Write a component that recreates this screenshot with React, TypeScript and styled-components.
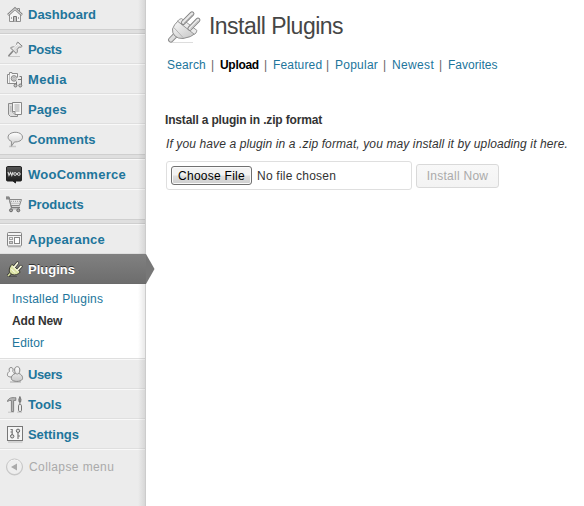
import React from 'react';
import styled, { createGlobalStyle } from 'styled-components';

const Global = createGlobalStyle`
  * { box-sizing: border-box; }
  body { margin: 0; background: #fff; font: 12px/16px "Liberation Sans", Arial, sans-serif; color: #333; }
`;

const Defs = styled.svg`
  position: absolute;
  width: 0;
  height: 0;
`;
const Page = styled.div`
  display: flex;
  height: 506px;
  overflow: hidden;
`;
const Sidebar = styled.nav`
  position: relative;
  width: 146px;
  flex: none;
  background: #ececec;
  &::after {
    content: '';
    position: absolute;
    inset: 0 0 0 auto;
    width: 7px;
    border-right: 1px solid #ccc;
    background: linear-gradient(90deg, rgba(0, 0, 0, 0), rgba(0, 0, 0, 0.09));
    pointer-events: none;
  }
`;
const Item = styled.a<{ $first?: boolean; $last?: boolean }>`
  display: flex;
  align-items: center;
  height: ${p => (p.$first ? 29 : 30)}px;
  border-top: ${p => (p.$first ? 0 : 1)}px solid #f9f9f9;
  border-bottom: 1px solid ${p => (p.$last ? '#ececec' : '#dfdfdf')};
  padding-left: 5px;
  color: #21759b;
  text-decoration: none;
`;
const Current = styled(Item)`
  position: relative;
  z-index: 2;
  border-top: 1px solid #808080;
  border-bottom: 1px solid #6a6a6a;
  background: linear-gradient(#808080, #6d6d6d);
  color: #fff;
  text-shadow: 0 -1px 0 #333;
`;
const Arrow = styled.svg`
  position: absolute;
  left: 146px;
  top: -1px;
`;
const Icon = styled.svg`
  width: 20px;
  height: 20px;
  flex: none;
  margin-right: 3px;
`;
const Label = styled.span<{ $ls?: number }>`
  padding-top: 2px;
  font-size: 13px;
  font-weight: bold;
  letter-spacing: ${p => p.$ls || 0}px;
  white-space: nowrap;
`;
const Separator = styled.div`
  height: 5px;
  background: #dfdfdf;
  border-top: 1px solid #cfcfcf;
  border-bottom: 1px solid #cfcfcf;
`;
const Submenu = styled.div`
  height: 75px;
  padding: 4px 0 0 12px;
  background: #fff;
  border-bottom: 1px solid #dfdfdf;
`;
const SubItem = styled.a<{ $on?: boolean; $ls: number }>`
  display: block;
  line-height: 22px;
  color: ${p => (p.$on ? '#333' : '#21759b')};
  font-weight: ${p => (p.$on ? 'bold' : 'normal')};
  letter-spacing: ${p => p.$ls}px;
`;
const Collapse = styled.div`
  display: flex;
  align-items: center;
  height: 34px;
  padding-left: 5px;
  border-top: 1px solid #f9f9f9;
  color: #aaa;
  letter-spacing: 0.4px;
`;
const CollapseIcon = styled(Icon)`
  margin-right: 4px;
`;
const Main = styled.main`
  flex: 1;
  padding: 9px 0 0 19px;
  white-space: nowrap;
`;
const Header = styled.header`
  display: flex;
  height: 35px;
  margin-left: 1px;
`;
const Plug = styled.svg`
  width: 36px;
  height: 36px;
  margin-right: 5px;
`;
const Title = styled.h1`
  margin: 0 0 0 2px;
  color: #464646;
  font-size: 23px;
  line-height: 34px;
  font-weight: normal;
  letter-spacing: -0.53px;
`;
const Tabs = styled.div`
  display: flex;
  margin: 13px 0 0 2px;
  height: 16px;
`;
const Tab = styled.a<{ $w: number; $ls: number; $on?: boolean }>`
  width: ${p => p.$w}px;
  color: ${p => (p.$on ? '#000' : '#21759b')};
  font-weight: ${p => (p.$on ? 'bold' : 'normal')};
  letter-spacing: ${p => p.$ls}px;
`;
const Bar = styled.span<{ $w: number }>`
  width: ${p => p.$w}px;
  color: #666;
`;
const FormTitle = styled.h4`
  margin: 39px 0 0;
  font-size: 12px;
  line-height: 16px;
  letter-spacing: -0.16px;
`;
const Help = styled.p`
  margin: 8px 0 0 1px;
  font-style: italic;
  letter-spacing: 0.115px;
`;
const Form = styled.div`
  display: flex;
  align-items: center;
  gap: 4px;
  margin: 9px 0 0 1px;
`;
const FileField = styled.div`
  display: flex;
  align-items: center;
  width: 246px;
  height: 29px;
  padding: 0 4px;
  border: 1px solid #dfdfdf;
  border-radius: 3px;
  letter-spacing: 0.22px;
`;
const ChooseButton = styled.button`
  width: 81px;
  height: 19px;
  margin-right: 5px;
  padding: 0;
  border: 1px solid #707070;
  border-radius: 3px;
  box-shadow: inset 0 0 0 1px #fafafa;
  background: linear-gradient(#f2f2f2 0 48%, #dedede 52%, #cfcfcf);
  color: #000;
  font: 12px/16px "Liberation Sans", Arial, sans-serif;
  letter-spacing: 0.25px;
`;
const InstallButton = styled.button`
  width: 83px;
  height: 24px;
  padding: 0;
  border: 1px solid #d9d9d9;
  border-radius: 3px;
  background: linear-gradient(#f8f8f8, #f3f3f3);
  color: #aaa;
  font: 12px/22px "Liberation Sans", Arial, sans-serif;
  letter-spacing: 0.25px;
`;

const art: Record<string, React.ReactNode> = {
  home: (
    <>
      <path d="M4.5 10.5V17.5H15.5V10.5L10 5Z" fill="#f3f3f3" stroke="#929292" />
      <path d="M12.5 4.5H14.5V9L12.5 7Z" fill="#eee" stroke="#8c8c8c" />
      <path d="M3 11L10 4.5L17 11" fill="none" stroke="#858585" strokeWidth="2.6" />
      <path d="M3.3 10.8L10 4.7L16.7 10.8" fill="none" stroke="#f8f8f8" strokeWidth=".9" />
      <path d="M8.5 17.5V12.5H11.5V17.5" fill="#c4c4c4" stroke="#777" />
      <path d="M6.5 13V15M13.5 13V15" stroke="#aaa" />
    </>
  ),
  pin: (
    <>
      <path d="M3 17.5H15" stroke="#c6c6c6" />
      <path d="M3.5 17L8 12" stroke="#858585" strokeWidth="1.6" />
      <path d="M5.5 9C6.7 7.8 8.5 7.8 9.7 8L12 5.8C11.5 4.8 11.8 4 12.8 3L17.2 7.2C16.3 8.2 15.5 8.5 14.3 8L12.2 10.4C12.7 12 12.4 13.4 11.2 14.4Z" fill="#dedede" stroke="#808080" />
      <path d="M8 9.5L12.8 5.3L14.5 6.4" fill="none" stroke="#fff" />
    </>
  ),
  media: (
    <>
      <path d="M2.5 5.5H4.5V3.5H7V4.5H12.5V14.5H2.5Z" fill="#f6f6f6" stroke="#8b8b8b" />
      <path d="M4.5 6V14" stroke="#c0c0c0" />
      <circle cx="9" cy="9.4" r="2.8" fill="#ccc" stroke="#8b8b8b" />
      <circle cx="9" cy="9.4" r="1" fill="#fff" stroke="#aaa" />
      <path d="M11.5 16V8.5H16.8V16" fill="#ececec" />
      <path d="M11.5 17V12.5M16.5 16V7.5H14.5M16.5 10.5H13" fill="none" stroke="#777" />
      <circle cx="10.5" cy="16.5" r="1.5" fill="#ccc" stroke="#777" />
      <circle cx="15.3" cy="16.5" r="1.5" fill="#ccc" stroke="#777" />
    </>
  ),
  pages: (
    <>
      <path d="M3.5 4.5H12.5V17.5H5.5L3.5 15.5Z" fill="#ddd" stroke="#8b8b8b" />
      <path d="M7.5 3.5H16.5V15.5H10L7.5 13Z" fill="#f7f7f7" stroke="#888" />
      <path d="M9.5 6H14.5M9.5 8H14.5M9.5 10H14.5M10 12H14.5M5 8H6.5M5 10H6.5M5 12H6.5" stroke="#a5a5a5" />
      <path d="M7.5 12.5H10V15.5" fill="#ddd" stroke="#888" />
    </>
  ),
  comment: (
    <>
      <path d="M4 17.5H11" stroke="#c8c8c8" strokeWidth="1.5" />
      <path d="M6.5 12.4C1.8 10.6 2.2 5.8 6 4.2C11 2 17.5 4 17.5 8.2C17.5 11.4 13.5 13.2 9.5 12.9L6.3 17.3Z" fill="url(#soft)" stroke="#909090" />
    </>
  ),
  woo: (
    <>
      <path d="M2.5 2.5H15.5Q16.5 2.5 16.5 4V16Q16.5 17 15.5 17H10.5V19L8 17H2.5Q1.5 17 1.5 16V4Q1.5 2.5 2.5 2.5Z" fill="url(#black)" stroke="#222" />
      <path d="M3 8L4 11.4L5.5 8.5L6.8 11.4L8 8" fill="none" stroke="#ddd" strokeWidth="1.1" />
      <circle cx="10.1" cy="10" r="1.4" fill="none" stroke="#ddd" />
      <circle cx="13.8" cy="10" r="1.4" fill="none" stroke="#ddd" />
    </>
  ),
  cart: (
    <>
      <path d="M1 3.5H4L6.5 13.5H15" fill="none" stroke="#7d7d7d" strokeWidth="1.4" />
      <path d="M4.5 5.5H16.5L14.5 11.5H6Z" fill="#e8e8e8" stroke="#8a8a8a" />
      <path d="M6 7.3H16M6.5 9.3H15" stroke="#999" strokeDasharray="1 1" />
      <path d="M5.5 15H14.5" stroke="#aaa" />
      <circle cx="6" cy="16.3" r="1.5" fill="#aaa" stroke="#696969" />
      <circle cx="13.3" cy="16.3" r="1.5" fill="#aaa" stroke="#696969" />
      <path d="M1 2.5H4V5.5H1Z" fill="#888" />
    </>
  ),
  appearance: (
    <>
      <path d="M3 18H16" stroke="#c5c5c5" />
      <rect x="2.5" y="3.5" width="14" height="13.5" rx="1" fill="#f4f4f4" stroke="#858585" />
      <path d="M3 6.5H16" stroke="#8d8d8d" />
      <rect x="4.5" y="8.5" width="3" height="2" fill="none" stroke="#a0a0a0" />
      <rect x="4.5" y="12.5" width="3" height="2" fill="#ccc" stroke="#999" />
      <rect x="9.5" y="8.5" width="5" height="6" fill="#fff" stroke="#888" />
    </>
  ),
  plugin: (
    <>
      <path d="M2.5 17.5H12" stroke="#535353" />
      <path d="M3 17L6 13.8" stroke="#333" strokeWidth="3.2" />
      <path d="M3 17L6 13.8" stroke="#dce3a1" strokeWidth="1.5" />
      <path d="M9.5 7.5L12.5 4M13 10.8L16 7.4" stroke="#333" strokeWidth="3.2" strokeLinecap="round" />
      <path d="M7 5.3L15.3 13C12.8 15.8 10 16.6 7 15.5L4.4 13.2C3.8 10.2 4.7 7.5 7 5.3Z" fill="#dce3a6" stroke="#3c3c33" />
      <path d="M9.5 7.8L12.5 4M12.7 11L16 7.4" stroke="#f7f7db" strokeWidth="1.8" strokeLinecap="round" />
      <path d="M7.5 7L13 12.5M6.2 9.8L10 13.7" stroke="#fffff0" />
    </>
  ),
  users: (
    <>
      <path d="M5 18H16" stroke="#aaa" />
      <path d="M6 3.5C3.8 3.5 3.8 6 4.6 7.3C2 8.4 2 12 3.3 12.4C5 13.5 9 13.2 9.5 11.5C10 9.2 8.7 8 7.6 7.3C8.5 6 8.4 3.5 6 3.5Z" fill="#f3f3f3" stroke="#8c8c8c" />
      <path d="M12.3 2.7C9.2 2.7 9 6.5 10.6 9.5C6.8 10.5 5.8 13.4 6.6 15.4C8 18 15.5 18.2 17.3 15.3C18.3 13 16.5 10.3 13.9 9.5C15.5 6.5 15 2.7 12.3 2.7Z" fill="url(#soft)" stroke="#858585" />
      <path d="M10.4 9.3Q12.2 11 14 9.3" fill="none" stroke="#999" />
    </>
  ),
  tools: (
    <>
      <path d="M3 18.2H9M12 18.2H17" stroke="#c5c5c5" />
      <path d="M2.5 7C4 3.5 7 3.5 10.8 3.7V6.4H8.6V17.5H6.4V6.5Q4.2 6.1 2.5 7.5Z" fill="#b4b4b4" stroke="#828282" />
      <path d="M14.9 2.5L16 5.5L15.6 8H14.2L13.8 5.5Z" fill="#888" stroke="#777" />
      <path d="M14.9 7V11" stroke="#777" />
      <rect x="13.5" y="10.5" width="3" height="7" rx="1.2" fill="#ececec" stroke="#777" />
    </>
  ),
  settings: (
    <>
      <path d="M3 18H17.5" stroke="#bababa" />
      <rect x="2.5" y="2.5" width="15" height="14" fill="#f5f5f5" stroke="#777" />
      <path d="M7.2 5V11M13 9V15M5.5 5.5H7.5M5.5 8H7.5M13 12H15" stroke="#777" strokeWidth="1.2" />
      <circle cx="7.2" cy="12.3" r="1.7" fill="#ddd" stroke="#666" />
      <circle cx="13" cy="6.8" r="1.7" fill="#ddd" stroke="#666" />
    </>
  ),
};

type Entry = { icon: string; text: string; ls?: number };
const groups: Entry[][] = [
  [{ icon: 'home', text: 'Dashboard' }],
  [
    { icon: 'pin', text: 'Posts', ls: -0.35 },
    { icon: 'media', text: 'Media', ls: 0.4 },
    { icon: 'pages', text: 'Pages', ls: 0.1 },
    { icon: 'comment', text: 'Comments', ls: 0.05 },
  ],
  [
    { icon: 'woo', text: 'WooCommerce', ls: 0.26 },
    { icon: 'cart', text: 'Products', ls: -0.1 },
  ],
];
const tail: Entry[] = [
  { icon: 'users', text: 'Users', ls: -0.4 },
  { icon: 'tools', text: 'Tools' },
  { icon: 'settings', text: 'Settings', ls: -0.05 },
];
const tabs = [
  { text: 'Search', w: 44, ls: 0.15, bar: 9 },
  { text: 'Upload', w: 44, ls: -0.3, bar: 9, on: true },
  { text: 'Featured', w: 53, ls: 0.15, bar: 9 },
  { text: 'Popular', w: 48, ls: 0.25, bar: 9 },
  { text: 'Newest', w: 47, ls: 0.35, bar: 9 },
  { text: 'Favorites', w: 52, ls: 0.02, bar: 0 },
];

function MenuItem({ icon, text, ls, first, last }: Entry & { first?: boolean; last?: boolean }) {
  return (
    <Item $first={first} $last={last}>
      <Icon viewBox="0 0 20 20">{art[icon]}</Icon>
      <Label $ls={ls}>{text}</Label>
    </Item>
  );
}

export default function App() {
  return (
    <>
      <Global />
      <Defs>
        <defs>
          <linearGradient id="soft" x2="0" y2="1"><stop stopColor="#fff" /><stop offset="1" stopColor="#c9c9c9" /></linearGradient>
          <linearGradient id="black" x2="0" y2="1"><stop stopColor="#555" /><stop offset="1" stopColor="#151515" /></linearGradient>
          <linearGradient id="metal" x2="1" y2="1"><stop stopColor="#fafafa" /><stop offset="1" stopColor="#c3c3c3" /></linearGradient>
        </defs>
      </Defs>
      <Page>
        <Sidebar>
          {groups.map((g, gi) => (
            <React.Fragment key={gi}>
              {g.map((e, i) => (
                <MenuItem key={e.text} {...e} first={gi === 0} last={i === g.length - 1} />
              ))}
              <Separator />
            </React.Fragment>
          ))}
          <MenuItem icon="appearance" text="Appearance" ls={0.27} />
          <Current>
            <Icon viewBox="0 0 20 20">{art.plugin}</Icon>
            <Label>Plugins</Label>
            <Arrow width="9" height="30"><path d="M0 0L8.5 15L0 30Z" fill="#777" /></Arrow>
          </Current>
          <Submenu>
            <SubItem $ls={0.22}>Installed Plugins</SubItem>
            <SubItem $on $ls={-0.18}>Add New</SubItem>
            <SubItem $ls={0.15}>Editor</SubItem>
          </Submenu>
          {tail.map(e => <MenuItem key={e.text} {...e} />)}
          <Collapse>
            <CollapseIcon viewBox="0 0 20 20">
              <circle cx="9.5" cy="10" r="8" fill="url(#soft)" stroke="#c5c5c5" />
              <circle cx="9.5" cy="10" r="7" fill="#eee" />
              <path d="M6 10L12 6.5V13.5Z" fill="#aaa" />
            </CollapseIcon>
            Collapse menu
          </Collapse>
        </Sidebar>
        <Main>
          <Header>
            <Plug viewBox="0 0 36 36">
              <path d="M5 33.5H27" stroke="#ddd" />
              <path d="M4.8 30.8L9.5 26" stroke="#8e8e8e" strokeWidth="5.5" strokeLinecap="round" />
              <path d="M4.8 30.8L9.5 26" stroke="#dedede" strokeWidth="3.5" strokeLinecap="round" />
              <path d="M12 12L30 24Q25 28.5 17 29.5Q12 29.8 9 27T6.5 20Q8 15.5 12 12Z" fill="url(#metal)" stroke="#909090" />
              <path d="M7.8 18.5L17.5 29" stroke="#b5b5b5" />
              <path d="M15.5 9.5Q13 10 11.5 12.2L28.2 25.2Q30.5 24.5 31 21.5Z" fill="#ebebeb" stroke="#999" />
              <path d="M17.2 13.6L26 4.8M23.8 19.4L32 11" stroke="#858585" strokeWidth="4.8" strokeLinecap="round" />
              <path d="M17.2 13.6L26 4.8M23.8 19.4L32 11" stroke="#e8e8e8" strokeWidth="2.8" strokeLinecap="round" />
              <path d="M18 14L26.5 5.5M24.6 19.8L32.5 11.7" stroke="#bbb" />
            </Plug>
            <Title>Install Plugins</Title>
          </Header>
          <Tabs>
            {tabs.map(t => (
              <React.Fragment key={t.text}>
                <Tab $w={t.w} $ls={t.ls} $on={t.on}>{t.text}</Tab>
                {t.bar > 0 && <Bar $w={t.bar}>|</Bar>}
              </React.Fragment>
            ))}
          </Tabs>
          <FormTitle>Install a plugin in .zip format</FormTitle>
          <Help>If you have a plugin in a .zip format, you may install it by uploading it here.</Help>
          <Form>
            <FileField><ChooseButton>Choose File</ChooseButton>No file chosen</FileField>
            <InstallButton disabled>Install Now</InstallButton>
          </Form>
        </Main>
      </Page>
    </>
  );
}
